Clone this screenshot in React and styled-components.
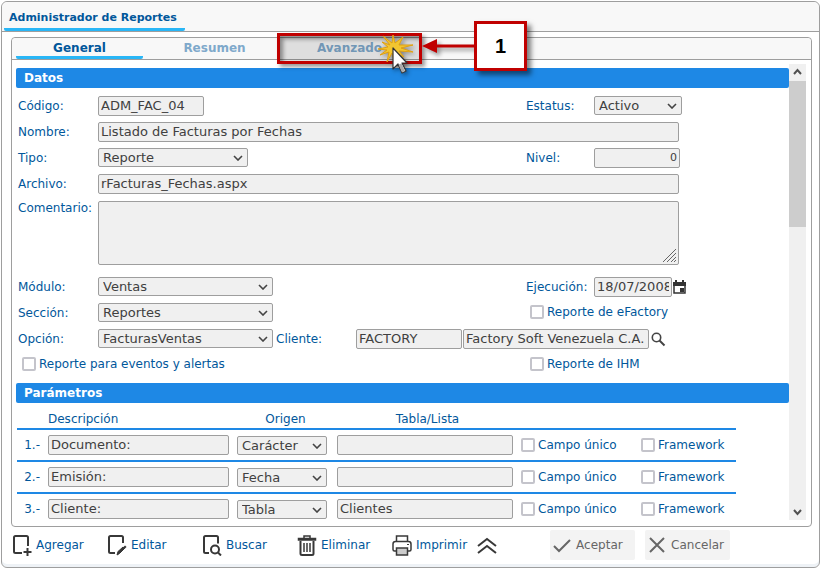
import React from "react";
import styled, { createGlobalStyle, css } from "styled-components";

const LABEL = "#01579b";
const BLUE = "#1e88e5";
const LINE = "#9e9e9e";

const parameters = [
  { id: 1, description: "Documento:", origin: "Carácter", list: "" },
  { id: 2, description: "Emisión:", origin: "Fecha", list: "" },
  { id: 3, description: "Cliente:", origin: "Tabla", list: "Clientes" },
];

const Select = ({ options, ...props }) => (
  <SelectWrapper>
    <SelectField {...props}>
      {options.map((option) => (
        <option key={option}>{option}</option>
      ))}
    </SelectField>
    <SelectArrow viewBox="0 0 10 6">
      <path d="M1 1l4 4 4-4" />
    </SelectArrow>
  </SelectWrapper>
);

const Check = ({ children }) => (
  <CheckLabel>
    <CheckBox type="checkbox" />
    {children}
  </CheckLabel>
);

const AddIcon = () => (
  <Icon viewBox="0 0 20 22">
    <path d="M10 19H3.500Q2 19 2 17.500V3.500Q2 2 3.500 2H14.500Q16 2 16 3.500V12" />
    <path d="M15.500 14v8M11.500 18h8" />
  </Icon>
);

const EditIcon = () => (
  <Icon viewBox="0 0 20 22">
    <path d="M8 19H3.500Q2 19 2 17.500V3.500Q2 2 3.500 2H14.500Q16 2 16 3.500V9" />
    <path d="M10 21l1-3.500 5-4.500 1.500 1.500-5 5z" fill="#383838" strokeWidth="1" />
    <path d="M17 12.500l1.500 1.500" strokeWidth="3" />
  </Icon>
);

const FindIcon = () => (
  <Icon viewBox="0 0 20 22">
    <path d="M7 19H3.500Q2 19 2 17.500V3.500Q2 2 3.500 2H14.500Q16 2 16 3.500V9.500" />
    <circle cx="13" cy="15.500" r="4" />
    <path d="M16 18.500l3 3" />
  </Icon>
);

const TrashIcon = () => (
  <Icon viewBox="0 0 20 22">
    <path d="M1.500 6V4.500h17V6zM7 4V2h6v2" strokeWidth="1.500" />
    <path d="M3.500 7v12.500q0 1.500 1.500 1.500h10q1.500 0 1.500-1.500V7" />
    <path d="M7 9v9M10 9v9M13 9v9" strokeWidth="1.500" />
  </Icon>
);

const PrintIcon = () => (
  <Icon viewBox="0 0 20 22">
    <path d="M4.500 7V2h11v5" strokeWidth="1.500" />
    <path
      d="M4 17H2.500q-1.500 0-1.500-1.500V10q0-2.500 2.500-2.500h13Q19 7.500 19 10v5.500q0 1.500-1.500 1.500H16"
      strokeWidth="1.500"
    />
    <path d="M4.500 14h11v7h-11z" fill="#ccc" strokeWidth="1.500" />
    <path d="M15 10.500h2" strokeWidth="1" />
  </Icon>
);

const App = () => (
  <>
    <GlobalStyle />
    <Window>
      <TitleBar>
        <Title>Administrador de Reportes</Title>
      </TitleBar>

      <Panel>
        <TabBar>
          <Tab $active>General</Tab>
          <Tab>Resumen</Tab>
          <TabHolder>
            <Tab>Avanzado</Tab>
            <Highlight />
            <Arrow viewBox="0 0 56 20">
              <path d="M12 10h44" stroke="#c00000" strokeWidth="3" />
              <path d="M0 10L15 3v14z" fill="#c00000" />
            </Arrow>
            <Callout>1</Callout>
            <Click viewBox="0 0 40 48">
              <path
                d="M14 13L7 4l9 7L17 3l2 8 8-6-4 8 14 0-12 3 12 4-14-1 5 6-8-4-2 7-2-7-5 9 2-10-9 3 7-5-9-1 10-2-6-5z"
                fill="#f2c530"
                stroke="#e0a010"
                strokeWidth="1"
              />
              <path
                d="M17 16v21l5-5 4 9 4-2-4-8h5z"
                fill="#fff"
                stroke="#333"
                strokeWidth="1.200"
                strokeLinejoin="round"
              />
              <path d="M22.500 32.500l3.500 8 3-1.500-3.500-7.500z" fill="#aaa" />
            </Click>
          </TabHolder>
        </TabBar>

        <Viewport>
          <Content>
            <SectionTitle>Datos</SectionTitle>
            <Form>
              <Label htmlFor="codigo">Código:</Label>
              <Field>
                <Input id="codigo" $width={106} defaultValue="ADM_FAC_04" />
              </Field>
              <Label htmlFor="estatus">Estatus:</Label>
              <Select id="estatus" options={["Activo"]} />

              <Label htmlFor="nombre">Nombre:</Label>
              <WideField>
                <Input id="nombre" defaultValue="Listado de Facturas por Fechas" />
              </WideField>

              <Label htmlFor="tipo">Tipo:</Label>
              <Field $width={150}>
                <Select id="tipo" options={["Reporte"]} />
              </Field>
              <Label htmlFor="nivel">Nivel:</Label>
              <Input id="nivel" $width={86} $number defaultValue="0" />

              <Label htmlFor="archivo">Archivo:</Label>
              <WideField>
                <Input id="archivo" defaultValue="rFacturas_Fechas.aspx" />
              </WideField>

              <Label htmlFor="comentario" $top>
                Comentario:
              </Label>
              <WideField>
                <TextArea id="comentario" />
                <Grip viewBox="0 0 15 15">
                  <path d="M1 14L14 1M5 14l9-9M9 14l5-5M12 14l2-2" />
                </Grip>
              </WideField>

              <Label htmlFor="modulo">Módulo:</Label>
              <Field $width={175}>
                <Select id="modulo" options={["Ventas"]} />
              </Field>
              <Label htmlFor="ejecucion">Ejecución:</Label>
              <DateField>
                <Input id="ejecucion" $width={78} defaultValue="18/07/2008" />
                <IconButton aria-label="Calendario">
                  <svg width="14" height="15" viewBox="0 0 14 15">
                    <path d="M1 4v9h11V4" fill="none" stroke="#333" strokeWidth="1.500" />
                    <path d="M0 2h13v4H0zM2 0h2v3H2zM9 0h2v3H9zM7 8h4v4H7z" fill="#333" />
                  </svg>
                </IconButton>
              </DateField>

              <Label htmlFor="seccion">Sección:</Label>
              <Field $width={175}>
                <Select id="seccion" options={["Reportes"]} />
              </Field>
              <CheckField>
                <Check>Reporte de eFactory</Check>
              </CheckField>

              <Label htmlFor="opcion">Opción:</Label>
              <ClientField>
                <Field $width={175}>
                  <Select id="opcion" options={["FacturasVentas"]} />
                </Field>
                <ClientLabel htmlFor="cliente">Cliente:</ClientLabel>
                <Input id="cliente" $width={106} defaultValue="FACTORY" />
                <Input
                  $width={186}
                  aria-label="Nombre del cliente"
                  defaultValue="Factory Soft Venezuela C.A."
                />
                <IconButton aria-label="Buscar cliente">
                  <svg width="15" height="15" viewBox="0 0 15 15" fill="none" stroke="#444">
                    <circle cx="5.500" cy="5.500" r="4.200" strokeWidth="1.600" />
                    <path d="M8.500 8.500l5 5" strokeWidth="2" />
                  </svg>
                </IconButton>
              </ClientField>

              <CheckField>
                <Check>Reporte para eventos y alertas</Check>
              </CheckField>
              <CheckField>
                <Check>Reporte de IHM</Check>
              </CheckField>
            </Form>

            <SectionTitle>Parámetros</SectionTitle>
            <Table>
              <colgroup>
                <col width="31" />
                <col width="189" />
                <col width="100" />
                <col width="184" />
                <col width="120" />
                <col />
              </colgroup>
              <thead>
                <tr>
                  <Th />
                  <Th $left>Descripción</Th>
                  <Th>Origen</Th>
                  <Th>Tabla/Lista</Th>
                  <Th />
                  <Th />
                </tr>
              </thead>
              <tbody>
                {parameters.map((item) => (
                  <Row key={item.id}>
                    <Td $number>{item.id}.-</Td>
                    <Td>
                      <Input
                        aria-label={`Descripción ${item.id}`}
                        $width={181}
                        defaultValue={item.description}
                      />
                    </Td>
                    <Td>
                      <Field $width={90}>
                        <Select aria-label={`Origen ${item.id}`} options={[item.origin]} />
                      </Field>
                    </Td>
                    <Td>
                      <Input
                        aria-label={`Tabla/Lista ${item.id}`}
                        $width={176}
                        defaultValue={item.list}
                      />
                    </Td>
                    <Td>
                      <Check>Campo único</Check>
                    </Td>
                    <Td>
                      <Check>Framework</Check>
                    </Td>
                  </Row>
                ))}
              </tbody>
            </Table>
          </Content>
          <Scrollbar>
            <ScrollArrow viewBox="0 0 17 17">
              <path d="M5 10l3.500-4 3.500 4" />
            </ScrollArrow>
            <Thumb />
            <ScrollArrow viewBox="0 0 17 17">
              <path d="M5 7l3.500 4L12 7" />
            </ScrollArrow>
          </Scrollbar>
        </Viewport>
      </Panel>

      <Footer>
        <Action>
          <AddIcon />
          Agregar
        </Action>
        <Action>
          <EditIcon />
          Editar
        </Action>
        <Action>
          <FindIcon />
          Buscar
        </Action>
        <Action>
          <TrashIcon />
          Eliminar
        </Action>
        <Action $compact>
          <PrintIcon />
          Imprimir
        </Action>
        <Action $compact aria-label="Más acciones">
          <Icon viewBox="0 0 20 22">
            <path d="M1 12l9-7 9 7M1 19l9-7 9 7" />
          </Icon>
        </Action>
        <Confirm>
          <Action $muted>
            <Icon viewBox="0 0 20 22" stroke="#666">
              <path d="M2 12l5 5L18 6" />
            </Icon>
            Aceptar
          </Action>
          <Action $muted>
            <Icon viewBox="0 0 20 22" stroke="#666">
              <path d="M3 4l14 14M17 4L3 18" />
            </Icon>
            Cancelar
          </Action>
        </Confirm>
      </Footer>
    </Window>
  </>
);

const GlobalStyle = createGlobalStyle`
  * {
    box-sizing: border-box;
  }

  body {
    margin: 0;
    padding: 1px;
    background: #fff;
    color: ${LABEL};
    font-family: "DejaVu Sans", Verdana, sans-serif;
    font-size: 11px;
  }

  button, input, select, textarea {
    font-family: inherit;
  }
`;

const Window = styled.main`
  border: 1px solid ${LINE};
  border-radius: 6px;
  box-shadow: inset 0 -3px #eef2f6;
`;

const TitleBar = styled.header`
  display: flex;
  height: 30px;
  padding: 0 2px;
  background: #f8f8f8;
  border-bottom: 1px solid ${LINE};
  border-radius: 6px 6px 0 0;
`;

const Title = styled.h1`
  margin: 0;
  padding: 4px 8px 0 5px;
  font-size: 11px;
  line-height: 24px;
  border-bottom: 3px solid #29b6f6;
  border-radius: 2px;
`;

const Panel = styled.section`
  margin: 5px 7px 0 9px;
  border: 1px solid ${LINE};
  border-radius: 4px;
`;

const TabBar = styled.nav`
  display: flex;
  gap: 8px;
  height: 22px;
  padding: 0 4px;
  background: #f8f8f8;
  border-bottom: 1px solid ${LINE};
  border-radius: 4px 4px 0 0;
`;

const TabHolder = styled.div`
  position: relative;
`;

const Tab = styled.button`
  width: 127px;
  height: 21px;
  padding: 2px 0 0;
  color: ${(props) => (props.$active ? LABEL : "#7fa9cb")};
  font-size: 12px;
  font-weight: bold;
  background: none;
  border: none;
  border-bottom: 3px solid ${(props) => (props.$active ? "#29b6f6" : "transparent")};
  border-radius: 2px;
`;

const Highlight = styled.div`
  position: absolute;
  top: -5px;
  left: -9px;
  width: 145px;
  height: 31px;
  background: rgba(0, 0, 0, 0.1);
  border: 3px solid #c00000;
  box-shadow: 3px 3px 4px rgba(0, 0, 0, 0.4), inset 3px 3px 4px rgba(0, 0, 0, 0.4);
`;

const Arrow = styled.svg`
  position: absolute;
  top: -2px;
  left: 136px;
  width: 56px;
  height: 20px;
  filter: drop-shadow(3px 3px 2px rgba(0, 0, 0, 0.4));
`;

const Callout = styled.div`
  position: absolute;
  top: -17px;
  left: 188px;
  width: 53px;
  height: 50px;
  color: #000;
  font: bold 20px/44px "Liberation Sans", Arial, sans-serif;
  text-align: center;
  background: #fff;
  border: 3px solid #c00000;
  box-shadow: 4px 4px 5px rgba(0, 0, 0, 0.5);
`;

const Click = styled.svg`
  position: absolute;
  top: -6px;
  left: 90px;
  width: 40px;
  height: 48px;
  filter: drop-shadow(2px 2px 2px rgba(0, 0, 0, 0.4));
`;

const Viewport = styled.div`
  display: flex;
  padding: 4px 5px 6px 4px;
`;

const Content = styled.div`
  flex: 1;
  min-width: 0;
  padding-top: 4px;
`;

const SectionTitle = styled.h2`
  margin: 0;
  padding: 0 8px;
  color: #fff;
  font-size: 12px;
  line-height: 20px;
  background: ${BLUE};
  border-radius: 2px;
`;

const Form = styled.div`
  display: grid;
  grid-template-columns: 80px minmax(0, 1fr) 68px 88px;
  gap: 6px 0;
  max-width: 666px;
  padding: 8px 0 10px 2px;
`;

const Label = styled.label`
  font-size: 12px;
  line-height: ${(props) => (props.$top ? "16px" : "20px")};
  align-self: ${(props) => (props.$top ? "start" : "center")};
`;

const Field = styled.div`
  width: ${(props) => (props.$width ? `${props.$width}px` : "auto")};
`;

const WideField = styled.div`
  position: relative;
  grid-column: span 3;
  padding-right: 3px;
`;

const DateField = styled.div`
  display: flex;
  align-items: center;
  width: 94px;
`;

const ClientField = styled.div`
  display: flex;
  grid-column: span 3;
  gap: 1px;
`;

const ClientLabel = styled(Label)`
  width: 81px;
  padding-left: 2px;
`;

const CheckField = styled.div`
  display: flex;
  grid-column: span 2;
  padding-left: 4px;
`;

const control = css`
  display: block;
  width: 100%;
  color: #404040;
  font-size: 13px;
  background: #f0f0f0;
  border: 1px solid ${LINE};
  border-radius: 2px;
`;

const Input = styled.input`
  ${control}
  width: ${(props) => (props.$width ? `${props.$width}px` : "100%")};
  height: 20px;
  padding: 0 2px 1px;
  ${(props) =>
    props.$number &&
    css`
      font-size: 11px;
      text-align: right;
    `}
`;

const TextArea = styled.textarea`
  ${control}
  height: 64px;
  margin: 1px 0 6px;
  resize: none;
`;

const Grip = styled.svg`
  position: absolute;
  right: 5px;
  bottom: 8px;
  width: 15px;
  height: 15px;
  fill: none;
  stroke: #666;
`;

const SelectWrapper = styled.div`
  position: relative;
`;

const SelectField = styled.select`
  ${control}
  height: 19px;
  padding: 0 18px 0 4px;
  appearance: none;
`;

const SelectArrow = styled.svg`
  position: absolute;
  top: 7px;
  right: 5px;
  width: 10px;
  height: 6px;
  fill: none;
  stroke: #444;
  stroke-width: 1.6px;
  pointer-events: none;
`;

const CheckLabel = styled.label`
  display: flex;
  align-items: center;
  gap: 3px;
  height: 18px;
  font-size: 12px;
  white-space: nowrap;
`;

const CheckBox = styled.input`
  width: 14px;
  height: 14px;
  margin: 0;
  background: #fff;
  border: 2px solid #c4c4cb;
  border-radius: 2px;
  appearance: none;

  &:checked {
    background: ${BLUE};
  }
`;

const IconButton = styled.button`
  display: flex;
  align-items: center;
  padding: 0 1px;
  background: none;
  border: none;
`;

const Table = styled.table`
  width: 100%;
  max-width: 720px;
  padding-left: 1px;
  border-spacing: 0;
  table-layout: fixed;
`;

const Th = styled.th`
  height: 25px;
  padding: 6px 3px 0 0;
  font-size: 12px;
  font-weight: normal;
  text-align: ${(props) => (props.$left ? "left" : "center")};
`;

const Td = styled.td`
  height: 32px;
  padding: ${(props) => (props.$number ? "5px 8px 5px 0" : "5px 0")};
  font-size: 12px;
  text-align: ${(props) => (props.$number ? "right" : "left")};
  border-top: 2px solid ${BLUE};
`;

const Row = styled.tr`
  &:last-child ${Td} {
    height: 28px;
    padding-bottom: 1px;
  }
`;

const Scrollbar = styled.div`
  display: flex;
  flex-direction: column;
  width: 17px;
  background: #f0f0f0;
`;

const ScrollArrow = styled.svg`
  width: 17px;
  height: 17px;
  fill: none;
  stroke: #505050;
  stroke-width: 2px;
`;

const Thumb = styled.div`
  height: 32%;
  margin-bottom: auto;
  background: #cdcdcd;
`;

const Footer = styled.footer`
  display: flex;
  align-items: center;
  height: 40px;
  padding: 0 10px 4px;
`;

const Action = styled.button`
  display: flex;
  align-items: center;
  gap: 4px;
  width: ${(props) => (props.$compact ? "auto" : "95px")};
  height: 30px;
  padding: 0;
  color: ${LABEL};
  font-size: 12px;
  background: none;
  border: none;

  ${(props) =>
    props.$compact &&
    css`
      margin-right: 10px;
    `}

  ${(props) =>
    props.$muted &&
    css`
      width: 85px;
      padding-left: 2px;
      color: #666;
      background: #f3f3f3;
      border-radius: 2px;
    `}
`;

const Icon = styled.svg`
  flex: none;
  width: 20px;
  height: 22px;
  fill: none;
  stroke: ${(props) => props.stroke || "#383838"};
  stroke-width: 2px;
`;

const Confirm = styled.div`
  display: flex;
  gap: 10px;
  margin-left: 43px;
`;

export default App;
